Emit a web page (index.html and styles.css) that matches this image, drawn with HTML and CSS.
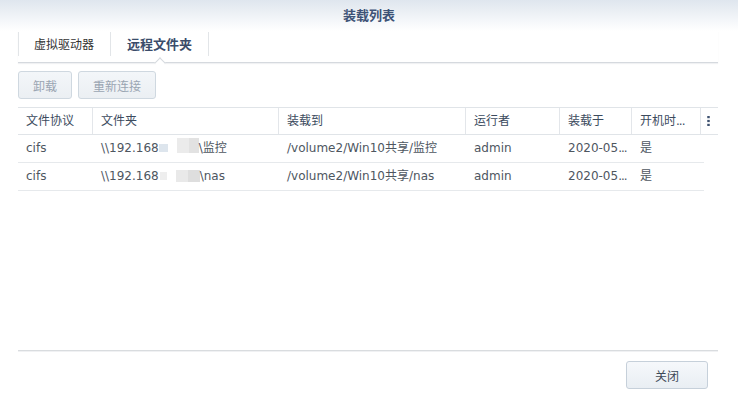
FILE: index.html
```html
<!DOCTYPE html>
<html lang="zh-CN">
<head>
<meta charset="utf-8">
<title>装载列表</title>
<link rel="stylesheet" href="styles.css">
</head>
<body>
<div class="window">
  <div class="titlebar">装载列表</div>
  <div class="content">
    <div class="tabs">
      <div class="tab">虚拟驱动器</div>
      <div class="tab active">远程文件夹</div>
    </div>
    <div class="toolbar">
      <button class="btn disabled btn-unmount">卸载</button>
      <button class="btn disabled btn-reconnect">重新连接</button>
    </div>
    <div class="grid">
      <div class="ghead">
        <div class="hc">文件协议</div>
        <div class="hc">文件夹</div>
        <div class="hc">装载到</div>
        <div class="hc">运行者</div>
        <div class="hc">装载于</div>
        <div class="hc">开机时<span class="dots">...</span></div>
        <div class="hc menu">
          <svg width="3" height="10" viewBox="0 0 3 10"><rect x="0.25" y="0" width="2.5" height="2.2" fill="#3f5270"/><rect x="0.25" y="3.9" width="2.5" height="2.2" fill="#3f5270"/><rect x="0.25" y="7.8" width="2.5" height="2.2" fill="#3f5270"/></svg>
        </div>
      </div>
      <div class="grow">
        <div class="rc">cifs</div>
        <div class="rc">\\192.168<span class="blur b1"></span><span class="blur b2"></span>\监控</div>
        <div class="rc">/volume2/Win10共享/监控</div>
        <div class="rc">admin</div>
        <div class="rc">2020-05<span class="dots">...</span></div>
        <div class="rc">是</div>
      </div>
      <div class="grow">
        <div class="rc">cifs</div>
        <div class="rc">\\192.168<span class="blur b3"></span><span class="blur b4"></span>\nas</div>
        <div class="rc">/volume2/Win10共享/nas</div>
        <div class="rc">admin</div>
        <div class="rc">2020-05<span class="dots">...</span></div>
        <div class="rc">是</div>
      </div>
    </div>
    <div class="footer">
      <button class="btn btn-close">关闭</button>
    </div>
  </div>
</div>
</body>
</html>
```
FILE: styles.css
```css
* { box-sizing: border-box; }
html, body { margin: 0; padding: 0; background: #fff; }
body {
  width: 738px;
  height: 395px;
  overflow: hidden;
  font-family: "DejaVu Sans", "Noto Sans CJK SC", sans-serif;
  font-size: 12px;
  color: #505a64;
}
.window { display: flex; flex-direction: column; height: 395px; }
.titlebar {
  height: 31px;
  line-height: 31px;
  text-align: center;
  font-size: 13px;
  font-weight: bold;
  color: #3e5377;
  background: linear-gradient(#dfe6ee, #ffffff);
}
.content {
  padding: 0 20px 0 18px;
  display: flex;
  flex-direction: column;
  flex: 1;
}
.tabs {
  display: flex;
  height: 32px;
  padding-top: 1px;
  border-bottom: 1px solid #d5d9de;
  box-shadow: 0 1px 1px #f0f1f3;
}
.tab {
  position: relative;
  height: 24px;
  line-height: 24px;
  padding: 0 16px 0 15px;
  border-right: 1px solid #e2e5e8;
  color: #333;
  font-size: 12px;
  font-family: "Noto Sans CJK SC", sans-serif;
}
.tab:first-child { border-left: 1px solid #e2e5e8; }
.tab.active {
  font-weight: bold;
  font-size: 13px;
  color: #3a4c6a;
  padding: 0 16px 0 16px;
}
.tab.active::after {
  content: "";
  position: absolute;
  left: 50%;
  bottom: -11px;
  width: 7px;
  height: 7px;
  margin-left: -4px;
  background: #fff;
  border-left: 1px solid #d5d9de;
  border-top: 1px solid #d5d9de;
  transform: rotate(45deg);
}
.toolbar {
  display: flex;
  gap: 6px;
  margin-top: 8px;
}
.btn {
  height: 28px;
  padding: 0;
  border: 1px solid #c6d0da;
  border-radius: 3px;
  background: linear-gradient(#f6f8fb, #e9eef3);
  font-family: "Noto Sans CJK SC", sans-serif;
  font-size: 12px;
  color: #3f4a58;
}
.btn.disabled { color: #9aa5b2; background: linear-gradient(#f3f6f9, #ebeff3); border-color: #cfd8e0; }
.btn-unmount { width: 54px; }
.btn-reconnect { width: 78px; }
.grid {
  margin-top: 8px;
  height: 243px;
}
.ghead {
  display: grid;
  grid-template-columns: 75px 186px 187px 94px 72px 69px 17px;
  height: 28px;
  border-top: 1px solid #e0e4e8;
  border-bottom: 1px solid #e0e4e8;
  width: 700px;
}
.hc {
  padding-left: 8px;
  line-height: 26px;
  color: #3c4b5e;
  border-right: 1px solid #e3e6ea;
  white-space: nowrap;
  overflow: hidden;
}
.hc.menu { border-right: none; padding-left: 6px; display: flex; align-items: center; }
.grow {
  display: grid;
  grid-template-columns: 75px 186px 187px 94px 72px 72px;
  height: 28px;
  border-bottom: 1px solid #e6e9ec;
  width: 686px;
}
.rc {
  padding-left: 8px;
  line-height: 27px;
  white-space: nowrap;
  overflow: hidden;
  color: #4e565f;
}
.dots { letter-spacing: -1px; }
.blur { display: inline-block; vertical-align: middle; }
.b1 { width: 9px; height: 8px; background: #dde5ed; margin-top: -2px; }
.b2 { width: 22px; height: 15px; margin-left: 9px; background: linear-gradient(90deg, #ebebeb 0 55%, #e2e2e2 55% 100%); margin-top: -6px; }
.b3 { width: 7px; height: 8px; background: #eeeeee; margin-left: 1px; margin-top: -2px; }
.b4 { width: 24px; height: 12px; margin-left: 9px; background: linear-gradient(90deg, #e9e9e9 0 50%, #dedede 50% 100%); margin-top: -2px; }
.footer {
  margin-top: auto;
  border-top: 1px solid #d9dcdf;
  box-shadow: inset 0 1px 0 #f0f1f3;
  padding: 10px 10px 7px 0;
  display: flex;
  justify-content: flex-end;
  height: 45px;
}
.btn-close { width: 82px; height: 28px; color: #3d4856; }
```
